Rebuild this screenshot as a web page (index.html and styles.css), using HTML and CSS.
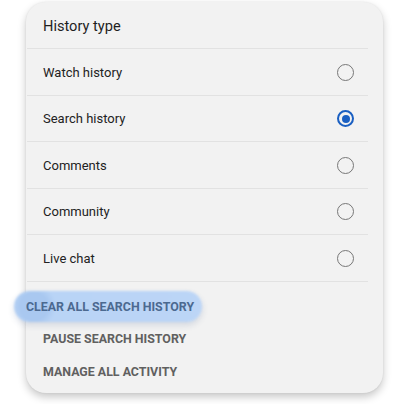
FILE: index.html
```
<!DOCTYPE html>
<html>
<head>
<meta charset="utf-8">
<link rel="stylesheet" href="styles.css">
</head>
<body>
<div class="card">
  <div class="title">History type</div>
  <ul class="list">
    <li class="row"><span>Watch history</span><span class="radio"></span></li>
    <li class="row"><span>Search history</span><span class="radio on"></span></li>
    <li class="row"><span>Comments</span><span class="radio"></span></li>
    <li class="row"><span>Community</span><span class="radio"></span></li>
    <li class="row"><span>Live chat</span><span class="radio"></span></li>
  </ul>
  <div class="actions">
    <div class="action active"><span class="label">CLEAR ALL SEARCH HISTORY</span></div>
    <div class="action"><span class="label">PAUSE SEARCH HISTORY</span></div>
    <div class="action"><span class="label">MANAGE ALL ACTIVITY</span></div>
  </div>
</div>
</body>
</html>
```
FILE: styles.css
```
html, body {
  margin: 0;
  padding: 0;
  background: #ffffff;
}
body {
  font-family: Roboto, "Liberation Sans", Arial, sans-serif;
  width: 396px;
  height: 404px;
  overflow: hidden;
}
.card {
  position: relative;
  margin: 2px 0 0 26px;
  width: 357px;
  height: 391px;
  box-sizing: border-box;
  background: #f2f2f2;
  border-radius: 20px;
  box-shadow: 0 4px 9px rgba(0, 0, 0, 0.22), 0 0 2px rgba(0, 0, 0, 0.08);
}
.title {
  height: 47px;
  box-sizing: border-box;
  display: flex;
  align-items: center;
  font-size: 14.6px;
  color: #1f1f1f;
  border-bottom: 1px solid #e2e2e2;
  margin: 0 15px 0 1px;
  padding: 1px 0 0 16px;
}
.list {
  list-style: none;
  margin: 0 15px 0 1px;
  padding: 0;
}
.row {
  height: 47px;
  box-sizing: border-box;
  display: flex;
  align-items: center;
  justify-content: space-between;
  padding: 0 14px 0 16px;
  font-size: 13px;
  color: #222222;
  border-bottom: 1px solid #e2e2e2;
}
.row:nth-child(2n) {
  height: 46px;
}
.radio {
  width: 17px;
  height: 17px;
  box-sizing: border-box;
  border: 1.6px solid #777777;
  border-radius: 50%;
  position: relative;
}
.radio.on {
  border: 2px solid #1a5fc2;
}
.radio.on::after {
  content: "";
  position: absolute;
  left: 2.5px;
  top: 2.5px;
  width: 8px;
  height: 8px;
  border-radius: 50%;
  background: #1a5fc2;
}
.actions {
  padding-top: 8px;
}
.action {
  position: relative;
  height: 32.5px;
  display: flex;
  align-items: center;
  padding-left: 17px;
  font-size: 12.4px;
  font-weight: 700;
  color: #606060;
}
.action .label {
  position: relative;
  z-index: 1;
}
.action.active {
  padding-left: 0;
  color: #4b6990;
}
.action.active::before {
  content: "";
  position: absolute;
  left: -12px;
  top: 1px;
  width: 188px;
  height: 31px;
  border-radius: 16px;
  background: radial-gradient(circle at 20px 50%, #a9c8f0 0, #a9c8f0 14px, #b9d4f6 22px, #bcd5f6 100%);
  filter: blur(1.2px);
  box-shadow: 0 3px 6px rgba(60, 90, 140, 0.18);
}
```
